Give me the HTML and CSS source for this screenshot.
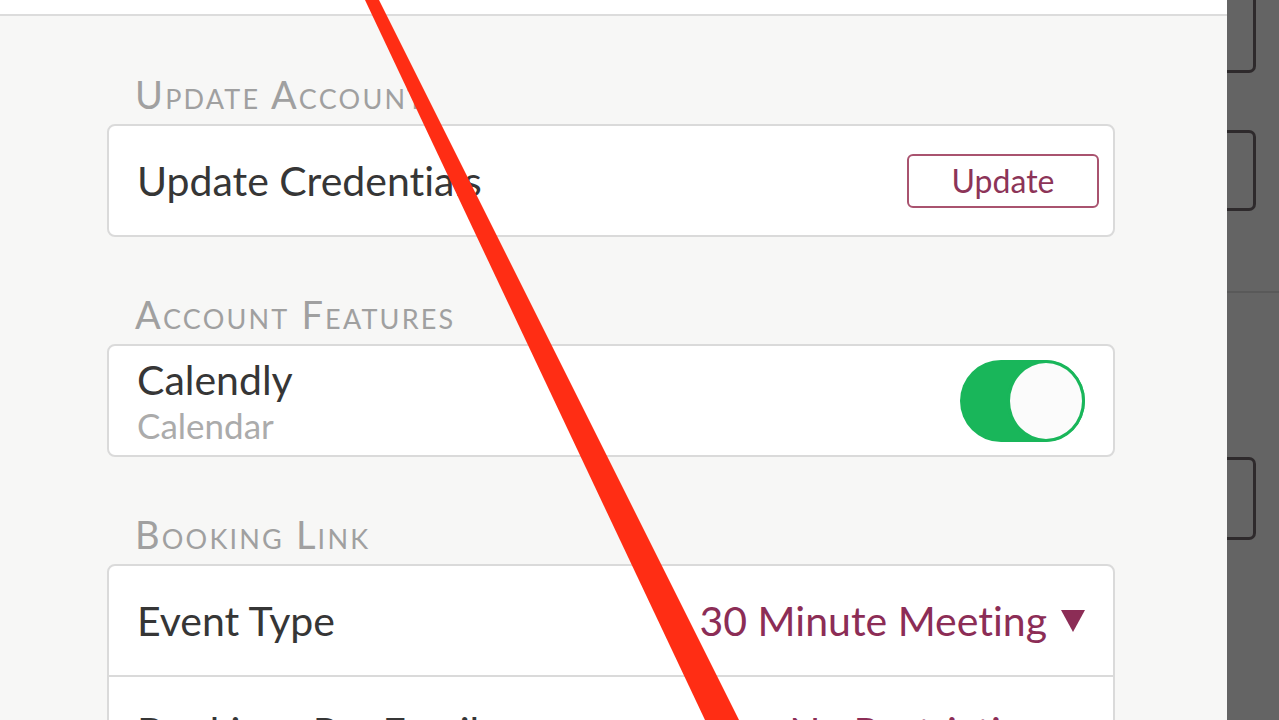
FILE: index.html
```html
<!DOCTYPE html>
<html lang="en">
  <head>
    <meta charset="UTF-8" />
    <meta name="viewport" content="width=device-width, initial-scale=1.0" />
    <title>Account Settings</title>
    <link rel="stylesheet" href="styles.css">
  </head>
  <body>
    <div class="screen">
      <main class="sheet">
        <div class="topbar"></div>

        <div class="content">
          <section class="group">
            <h2 class="group-title">Update Account</h2>
            <div class="card">
              <div class="row">
                <span class="row-label">Update Credentials</span>
                <button class="outline-btn" type="button">Update</button>
              </div>
            </div>
          </section>

          <section class="group">
            <h2 class="group-title">Account Features</h2>
            <div class="card">
              <div class="row">
                <div class="feature">
                  <span class="row-label">Calendly</span>
                  <span class="row-sub">Calendar</span>
                </div>
                <span class="toggle is-on"><span class="knob"></span></span>
              </div>
            </div>
          </section>

          <section class="group">
            <h2 class="group-title">Booking Link</h2>
            <div class="card">
              <div class="row">
                <span class="row-label">Event Type</span>
                <span class="select-value">30 Minute Meeting<span class="caret"></span></span>
              </div>
              <div class="row">
                <span class="row-label">Bookings Per Email</span>
                <span class="select-value">No Restriction<span class="caret"></span></span>
              </div>
            </div>
          </section>
        </div>
      </main>

      <aside class="backdrop">
        <div class="ghost-btn first"></div>
        <div class="ghost-btn second"></div>
        <div class="ghost-rule"></div>
        <div class="ghost-btn third"></div>
      </aside>

      <svg class="marker" width="1279" height="720" viewBox="0 0 1279 720">
        <polygon points="365,0 379,0 739,720 705,720" fill="#ff2d14" />
      </svg>
    </div>
  </body>
</html>
```

FILE: styles.css
```css
body {
  margin: 0;
  padding: 0;
  font-family: "Lato", "Open Sans", sans-serif;
  font-variant-ligatures: none;
  color: #363636;
  background-color: #646464;
  overflow: hidden;
}

.screen {
  position: relative;
  display: flex;
  height: 720px;
  overflow: hidden;
}

.sheet {
  width: 1227px;
  flex-shrink: 0;
  background-color: #f7f7f6;
  box-shadow: 2px 0 4px rgba(0, 0, 0, 0.25);
}

.topbar {
  height: 14px;
  background-color: #fff;
  border-bottom: 2px solid #dcdcdc;
}

.content {
  padding: 58px 0 0 107px;
  width: 1008px;
}

.group {
  margin-bottom: 57px;
}

.group-title {
  margin: 0 0 10px 28px;
  font-size: 38px;
  font-weight: 400;
  font-variant: small-caps;
  letter-spacing: 2.2px;
  line-height: 40px;
  color: #a0a0a0;
}

.card {
  background-color: #fff;
  border: 2px solid #dadada;
  border-radius: 8px;
}

.row {
  display: flex;
  align-items: center;
  justify-content: space-between;
  min-height: 109px;
  padding: 0 28px;
}

.row + .row {
  border-top: 2px solid #dadada;
}

.row-label {
  font-size: 41px;
  color: #363636;
}

.feature {
  display: flex;
  flex-direction: column;
}

.feature .row-label {
  line-height: 48px;
}

.row-sub {
  font-size: 35px;
  line-height: 42px;
  color: #ababab;
}

.outline-btn {
  margin-right: -14px;
  width: 192px;
  height: 54px;
  background-color: #fff;
  border: 2px solid #a9536f;
  border-radius: 6px;
  font-family: inherit;
  font-size: 32px;
  color: #8c3458;
  cursor: pointer;
}

.toggle {
  display: flex;
  justify-content: flex-end;
  width: 125px;
  height: 82px;
  border-radius: 41px;
  background-color: #e4e4e4;
}

.toggle.is-on {
  background-color: #19b65a;
}

.knob {
  width: 72px;
  height: 76px;
  border: 3px solid #19b65a;
  border-radius: 50%;
  background-color: #fbfbfb;
}

.select-value {
  display: flex;
  align-items: center;
  font-size: 41px;
  color: #8c2d56;
}

.caret {
  margin-left: 14px;
  width: 0;
  height: 0;
  border-left: 12px solid transparent;
  border-right: 12px solid transparent;
  border-top: 22px solid #8c2d56;
}

/* dimmed app behind the sheet */
.backdrop {
  flex: 1;
  display: flex;
  flex-direction: column;
  background-color: #646464;
}

.ghost-btn {
  width: 26px;
  border: 3px solid #2e2a2c;
  border-left: none;
  border-radius: 0 7px 7px 0;
}

.ghost-btn.first {
  margin-top: -10px;
  height: 77px;
}

.ghost-btn.second {
  margin-top: 57px;
  height: 75px;
}

.ghost-rule {
  margin-top: 80px;
  height: 2px;
  background-color: #595959;
}

.ghost-btn.third {
  margin-top: 164px;
  height: 77px;
}

.marker {
  position: absolute;
  top: 0;
  left: 0;
  pointer-events: none;
}
```
